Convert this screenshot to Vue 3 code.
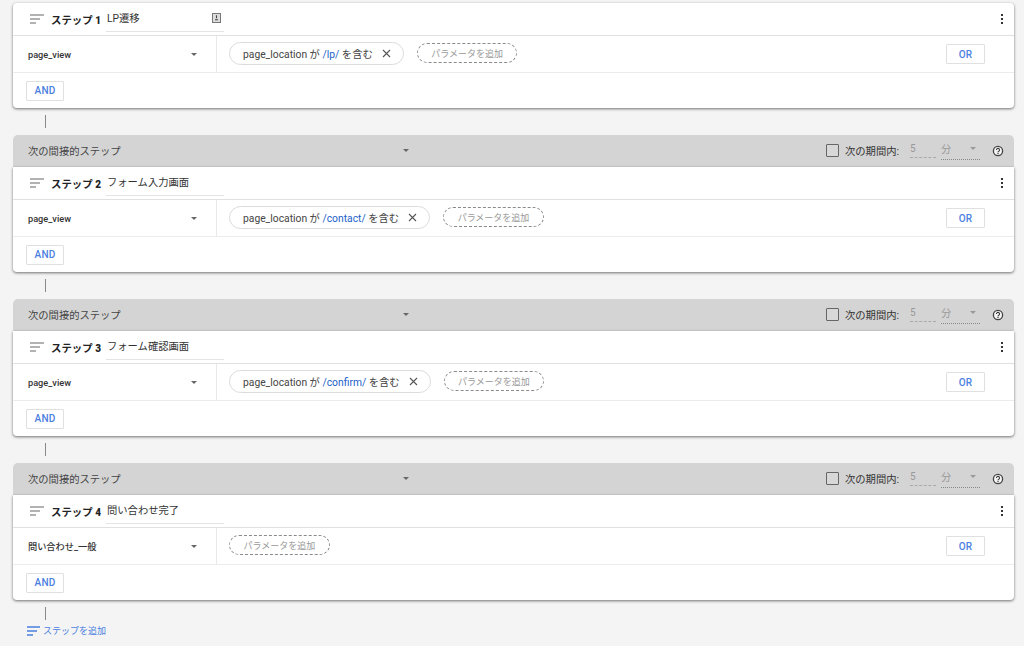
<script setup>
const steps = [
  { n: 1, name: 'LP遷移', event: 'page_view', value: '/lp/', alert: true },
  { n: 2, name: 'フォーム入力画面', event: 'page_view', value: '/contact/' },
  { n: 3, name: 'フォーム確認画面', event: 'page_view', value: '/confirm/' },
  { n: 4, name: '問い合わせ完了', event: '問い合わせ_一般', value: null },
]
</script>

<template>
  <main class="page">
    <template v-for="(s, i) in steps" :key="s.n">
      <div v-if="i > 0" class="band">
        <span class="band-title">次の間接的ステップ</span>
        <span class="band-caret caret"></span>
        <div class="period">
          <span class="check"></span>
          <span class="period-label">次の期間内:</span>
          <span class="num">5</span>
          <span class="unit">分<i class="caret light"></i></span>
          <svg class="help" width="12" height="12" viewBox="0 0 12 12">
            <circle cx="6" cy="6" r="4.6" fill="#f4f4f4" stroke="#444" stroke-width="1.3" />
            <path d="M4.5 4.9a1.5 1.5 0 1 1 2.4 1.2c-.6.4-.9.6-.9 1.1" fill="none" stroke="#333" stroke-width="1.1" />
            <circle cx="6" cy="8.5" r=".7" fill="#333" />
          </svg>
        </div>
      </div>
      <section class="card" :class="{ first: i === 0 }">
        <header class="head">
          <svg class="lines" width="14" height="10" viewBox="0 0 14 10">
            <path d="M0 1h14M0 5h10M0 9h6" stroke="#666" stroke-width="1.1" fill="none" />
          </svg>
          <span class="step-label">ステップ <b>{{ s.n }}</b></span>
          <div class="name">
            <span>{{ s.name }}</span>
            <svg v-if="s.alert" width="9" height="10" viewBox="0 0 9 10">
              <rect x=".5" y=".5" width="8" height="9" fill="#ddd" stroke="#777" />
              <path d="M4.5 2.2v3M3 6.8h3" stroke="#444" stroke-width="1.1" />
            </svg>
          </div>
          <span class="dots"><i></i><i></i><i></i></span>
        </header>
        <div class="cond">
          <div class="event">
            <span class="event-name">{{ s.event }}</span>
            <span class="caret"></span>
          </div>
          <div class="params">
            <span v-if="s.value" class="chip">
              <span>page_location が <em>{{ s.value }}</em> を含む</span>
              <svg width="9" height="9" viewBox="0 0 9 9"><path d="M1 1l7 7M8 1L1 8" stroke="#555" stroke-width="1.1" /></svg>
            </span>
            <span class="add-param">パラメータを追加</span>
          </div>
          <button class="btn or">OR</button>
        </div>
        <div class="foot"><button class="btn and">AND</button></div>
      </section>
      <div class="connector"></div>
    </template>
    <div class="add-step">
      <svg width="13" height="10" viewBox="0 0 13 10">
        <path d="M0 1h13M0 5h10M0 9h6" stroke="#4a7fe0" stroke-width="1.4" fill="none" />
      </svg>
      <span>ステップを追加</span>
    </div>
  </main>
</template>

<style>
html, body { margin: 0; background: #f4f4f4; }
</style>

<style scoped>
.page {
  box-sizing: border-box;
  height: 646px;
  overflow: hidden;
  padding: 3px 10px 0 13px;
  font-family: Roboto, "Noto Sans CJK JP", sans-serif;
  color: #333;
  background: #f4f4f4;
}
.card {
  background: #fff;
  border-radius: 0 0 4px 4px;
  box-shadow: 0 1px 3px rgba(0, 0, 0, .55);
  position: relative;
}
.card.first { border-radius: 4px; }
.head {
  height: 32px;
  display: flex;
  align-items: center;
  padding-left: 17px;
  border-bottom: 1px solid #e0e0e0;
}
.step-label {
  margin-left: 7px;
  width: 55px;
  font-size: 10.4px;
  font-weight: 700;
  color: #222;
  white-space: nowrap;
}
.step-label b { font-size: 10px; }
.name {
  width: 118px;
  height: 25px;
  padding: 0 3px 2px 1px;
  box-sizing: border-box;
  display: flex;
  align-items: center;
  justify-content: space-between;
  border-bottom: 1px solid #e4e4e4;
  font-size: 10.3px;
  color: #333;
}
.dots {
  margin-left: auto;
  margin-right: 11px;
  display: flex;
  flex-direction: column;
  gap: 2px;
}
.dots i { width: 2px; height: 2px; background: #333; display: block; }
.cond {
  height: 36px;
  display: flex;
  align-items: stretch;
  border-bottom: 1px solid #ececec;
}
.event {
  width: 204px;
  box-sizing: border-box;
  padding: 0 19px 0 15px;
  display: flex;
  align-items: center;
  justify-content: space-between;
  border-right: 1px solid #e8e8e8;
}
.event-name { font-size: 9.2px; font-weight: 500; color: #333; }
.params {
  flex: 1;
  display: flex;
  align-items: center;
  padding: 0 0 2px 12px;
  gap: 13px;
}
.chip {
  height: 21px;
  padding: 0 13px 0 13px;
  display: flex;
  align-items: center;
  border: 1px solid #dcdcdc;
  border-radius: 12px;
  font-size: 10.3px;
  color: #444;
  white-space: nowrap;
}
.chip em { font-style: normal; color: #1a5fc8; }
.chip svg { margin-left: 9px; margin-right: -1px; }
.add-param {
  height: 18px;
  padding: 0 13.5px;
  display: flex;
  align-items: center;
  border: 1px dashed #8a8a8a;
  border-radius: 11px;
  font-size: 9px;
  color: #999;
}
.btn {
  box-sizing: border-box;
  width: 39px;
  height: 20px;
  padding: 0;
  background: #fff;
  border: 1px solid #e0e0e0;
  border-radius: 1px;
  font-family: Roboto, sans-serif;
  font-size: 10px;
  font-weight: 500;
  letter-spacing: .2px;
  color: #4a7fe0;
}
.btn.and { width: 38px; }
.btn.or { align-self: center; margin-right: 29px; }
.foot {
  height: 35px;
  display: flex;
  align-items: center;
  padding-left: 13px;
}
.connector {
  width: 1px;
  height: 13px;
  margin: 7px 0 7px 32px;
  background: #888;
}
.band {
  box-sizing: border-box;
  height: 32px;
  display: flex;
  align-items: center;
  padding: 0 0 1px 15px;
  background: #d4d4d4;
  border-radius: 5px 5px 0 0;
  font-size: 10.3px;
  color: #444;
}
.band-title { width: 374px; }
.band-caret { margin-left: 1px; }
.caret {
  display: inline-block;
  width: 0;
  height: 0;
  border-left: 3px solid transparent;
  border-right: 3px solid transparent;
  border-top: 3px solid #666;
}
.caret.light { border-top-color: #999; }
.period {
  margin-left: auto;
  display: flex;
  align-items: center;
  padding-right: 10px;
}
.check {
  width: 11px;
  height: 11px;
  border: 1px solid #666;
  background: #d8d8d8;
  border-radius: 1px;
}
.period-label { margin-left: 6px; color: #333; }
.num {
  width: 26px;
  margin-left: 11px;
  padding-bottom: 3px;
  color: #999;
  font-size: 10px;
  border-bottom: 1px dashed #aaa;
}
.unit {
  width: 39px;
  margin-left: 5px;
  padding-bottom: 3px;
  display: flex;
  align-items: center;
  justify-content: space-between;
  color: #999;
  border-bottom: 1px dotted #888;
}
.unit i { margin-right: 4px; }
.help { margin-left: 12px; }
.add-step {
  display: flex;
  align-items: center;
  gap: 3px;
  margin: -3px 0 0 14px;
  font-size: 9px;
  color: #4a7fe0;
}
</style>
